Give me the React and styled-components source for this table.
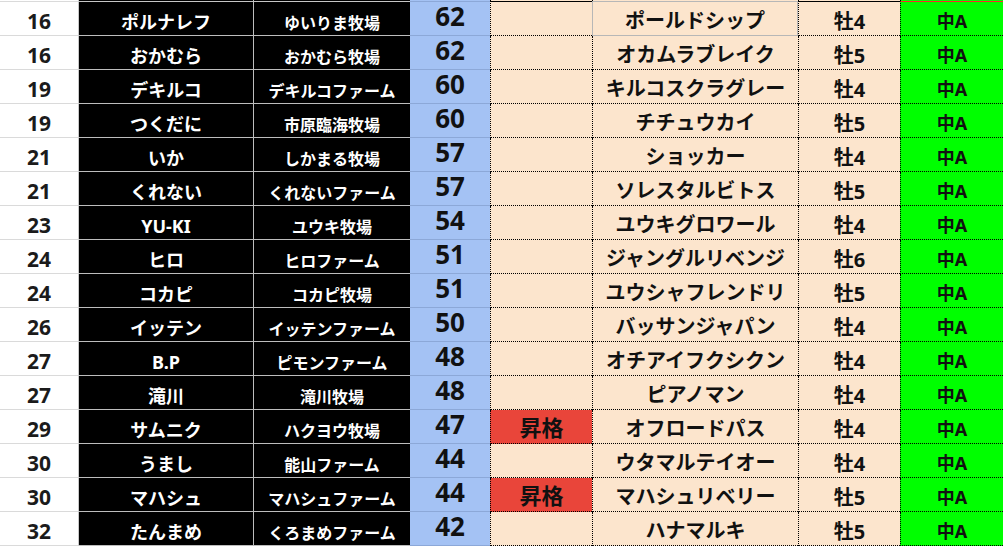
import React from "react";
import styled, { createGlobalStyle, css } from "styled-components";

const GlobalStyle = createGlobalStyle`
  html, body {
    margin: 0;
    padding: 0;
    background: #ffffff;
    overflow: hidden;
  }
  body {
    font-family: "Noto Sans", "Noto Sans CJK JP", sans-serif;
  }
`;

const COLS = "79px 175px 156px 80px 102px 206px 102px 103px";

const rows = [
  ["16", "ポルナレフ", "ゆいりま牧場", "62", "", "ポールドシップ", "牡4"],
  ["16", "おかむら", "おかむら牧場", "62", "", "オカムラブレイク", "牡5"],
  ["19", "デキルコ", "デキルコファーム", "60", "", "キルコスクラグレー", "牡4"],
  ["19", "つくだに", "市原臨海牧場", "60", "", "チチュウカイ", "牡5"],
  ["21", "いか", "しかまる牧場", "57", "", "ショッカー", "牡4"],
  ["21", "くれない", "くれないファーム", "57", "", "ソレスタルビトス", "牡5"],
  ["23", "YU-KI", "ユウキ牧場", "54", "", "ユウキグロワール", "牡4"],
  ["24", "ヒロ", "ヒロファーム", "51", "", "ジャングルリベンジ", "牡6"],
  ["24", "コカピ", "コカピ牧場", "51", "", "ユウシャフレンドリ", "牡5"],
  ["26", "イッテン", "イッテンファーム", "50", "", "バッサンジャパン", "牡4"],
  ["27", "B.P", "ピモンファーム", "48", "", "オチアイフクシクン", "牡4"],
  ["27", "滝川", "滝川牧場", "48", "", "ピアノマン", "牡4"],
  ["29", "サムニク", "ハクヨウ牧場", "47", "昇格", "オフロードパス", "牡4"],
  ["30", "うまし", "能山ファーム", "44", "", "ウタマルテイオー", "牡4"],
  ["30", "マハシュ", "マハシュファーム", "44", "昇格", "マハシュリベリー", "牡5"],
  ["32", "たんまめ", "くろまめファーム", "42", "", "ハナマルキ", "牡5"],
];

const Sheet = styled.div`
  width: 1003px;
  height: 546px;
  overflow: hidden;
`;

const Row = styled.div`
  display: grid;
  grid-template-columns: ${COLS};
  height: ${(p) => (p.$sliver ? "1px" : p.$first ? "35px" : "34px")};
`;

const Base = styled.div`
  box-sizing: border-box;
  display: flex;
  align-items: flex-end;
  justify-content: center;
  line-height: 1.2;
  font-weight: 700;
  white-space: nowrap;
  ${(p) => p.$top && css`border-top: 1px solid ${p.$line || "#c6c6c6"};`}
`;

const Rank = styled(Base)`
  background: #ffffff;
  color: #1b1b1b;
  font-size: 21px;
  padding-bottom: 1px;
  border-right: 1px solid #c8c8c8;
  border-bottom: ${(p) => (p.$sliver ? "none" : "1px solid #dadada")};
`;

const Owner = styled(Base)`
  background: #000000;
  color: #ffffff;
  font-size: ${(p) => (p.$small ? "16px" : "18px")};
  padding-bottom: ${(p) => (p.$small ? "2px" : "1px")};
  border-right: ${(p) => (p.$small ? "none" : "1px solid #bdbdbd")};
  border-bottom: ${(p) => (p.$sliver ? "none" : "1px solid #bdbdbd")};
`;

const Rating = styled(Base)`
  background: #a4c2f4;
  color: #111111;
  font-size: 26px;
  line-height: 1.1;
  padding-bottom: 4px;
  border-bottom: ${(p) => (p.$sliver ? "none" : "1px solid #8ca8d8")};
`;

const Dotted = styled(Base)`
  background: ${(p) => p.$bg || "#fce5cd"};
  color: #111111;
  font-size: ${(p) => p.$fs || "20px"};
  padding-bottom: ${(p) => p.$pb || "2px"};
  border-left: 1px dotted #000000;
  border-bottom: ${(p) => (p.$sliver ? "none" : "1px dotted #000000")};
  ${(p) =>
    p.$solid &&
    css`
      border-left: 1px solid #b7b7b7;
      border-right: 1px solid #b7b7b7;
      border-bottom: 1px solid #b7b7b7;
    `}
`;

const Promo = styled(Dotted)`
  background: ${(p) => (p.$on ? "#e9453a" : "#fce5cd")};
  font-size: 22px;
  padding-bottom: 3px;
`;

function SheetRow({ r, first }) {
  const [rank, name, farm, rating, promo, horse, sex] = r;
  return (
    <Row $first={first}>
      <Rank $top={first} $line="#dadada">{rank}</Rank>
      <Owner $top={first}>{name}</Owner>
      <Owner $top={first} $small>{farm}</Owner>
      <Rating $top={first} $line="#8ca8d8">{rating}</Rating>
      <Promo $on={!!promo} $top={first} $line="#000">{promo}</Promo>
      <Dotted $solid={first} $top={first} $line="#b7b7b7">{horse}</Dotted>
      <Dotted $pb="1px" $top={first} $line="#000">{sex}</Dotted>
      <Dotted $bg="#00ff00" $fs="18px" $pb="2px" $top={first} $line="#ff2a2a">
        中A
      </Dotted>
    </Row>
  );
}

export default function App() {
  return (
    <>
      <GlobalStyle />
      <Sheet>
        <Row $sliver>
          <Rank $sliver />
          <Owner $sliver />
          <Owner $sliver $small />
          <Rating $sliver />
          <Dotted $sliver />
          <Dotted $sliver />
          <Dotted $sliver />
          <Dotted $sliver $bg="#00ff00" />
        </Row>
        {rows.map((r, i) => (
          <SheetRow key={i} r={r} first={i === 0} />
        ))}
      </Sheet>
    </>
  );
}
